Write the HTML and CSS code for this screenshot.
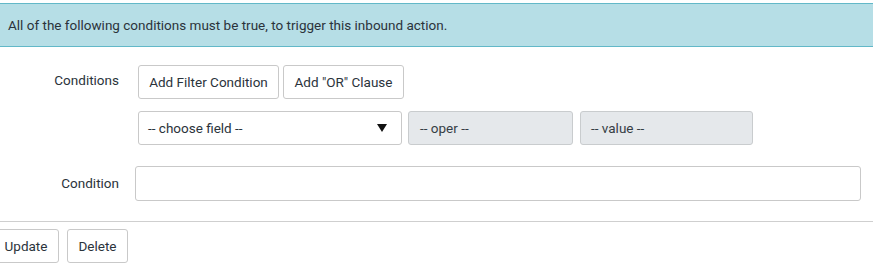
FILE: index.html
```html
<!DOCTYPE html>
<html>
<head>
<meta charset="utf-8">
<link rel="stylesheet" href="styles.css">
</head>
<body>
<div class="alert">All of the following conditions must be true, to trigger this inbound action.</div>
<div class="form">
  <div class="row">
    <div class="label label-top">Conditions</div>
    <div class="filter">
      <div class="btns">
        <button class="btn btn-add">Add Filter Condition</button>
        <button class="btn btn-or">Add "OR" Clause</button>
      </div>
      <div class="cond-row">
        <div class="select"><span>-- choose field --</span><span class="caret"></span></div>
        <div class="disabled oper">-- oper --</div>
        <div class="disabled value">-- value --</div>
      </div>
    </div>
  </div>
  <div class="row row-cond">
    <div class="label">Condition</div>
    <div class="input"></div>
  </div>
</div>
<div class="footer">
  <button class="btn btn-update">Update</button>
  <button class="btn btn-delete">Delete</button>
</div>
</body>
</html>
```
FILE: styles.css
```css
html, body {
  margin: 0;
  padding: 0;
  background: #fff;
}
body {
  font-family: Roboto, "Liberation Sans", sans-serif;
  font-size: 13.5px;
  color: #2b333b;
  overflow: hidden;
}
.alert {
  margin-top: 3px;
  height: 42px;
  box-sizing: content-box;
  background: #b6dee6;
  border-top: 1px solid #62b8c8;
  border-bottom: 1px solid #62b8c8;
  padding: 0 8px;
  display: flex;
  align-items: center;
}
.form {
  padding-top: 18px;
}
.row {
  display: flex;
  gap: 16px;
}
.label {
  width: 119px;
  flex: none;
  text-align: right;
  line-height: 34px;
}
.label-top {
  line-height: 30px;
}
.filter {
  padding-left: 3px;
  display: flex;
  flex-direction: column;
  gap: 12px;
}
.btns {
  display: flex;
  gap: 4px;
}
.btn {
  font-family: inherit;
  font-size: 13.5px;
  color: #2b333b;
  background: #fff;
  border: 1px solid #c9c9c9;
  border-radius: 3px;
  height: 34px;
  padding: 0;
  margin: 0;
  box-sizing: border-box;
  text-align: center;
}
.btn-add {
  width: 141px;
}
.btn-or {
  width: 121px;
}
.cond-row {
  display: flex;
  gap: 6px;
}
.select {
  width: 264px;
  height: 34px;
  box-sizing: border-box;
  border: 1px solid #c9c9c9;
  border-radius: 3px;
  background: #fff;
  display: flex;
  align-items: center;
  justify-content: space-between;
  padding: 0 14px 0 9px;
}
.caret {
  width: 0;
  height: 0;
  border-left: 5px solid transparent;
  border-right: 5px solid transparent;
  border-top: 8px solid #111;
}
.disabled {
  height: 34px;
  box-sizing: border-box;
  border: 1px solid #c9ccce;
  border-radius: 3px;
  background: #e5e8eb;
  display: flex;
  align-items: center;
  padding: 0 11px;
  color: #363d44;
}
.oper {
  width: 165px;
}
.value {
  width: 173px;
  margin-left: 1px;
  padding-left: 10px;
}
.row-cond {
  margin-top: 21px;
}
.input {
  width: 726px;
  height: 35px;
  box-sizing: border-box;
  border: 1px solid #c9c9c9;
  border-radius: 3px;
  background: #fff;
}
.footer {
  margin-top: 20px;
  border-top: 1px solid #cfcfcf;
  padding-top: 7px;
  display: flex;
  gap: 8px;
}
.btn-update {
  margin-left: -7px;
  width: 66px;
}
.btn-delete {
  width: 61px;
}
```
